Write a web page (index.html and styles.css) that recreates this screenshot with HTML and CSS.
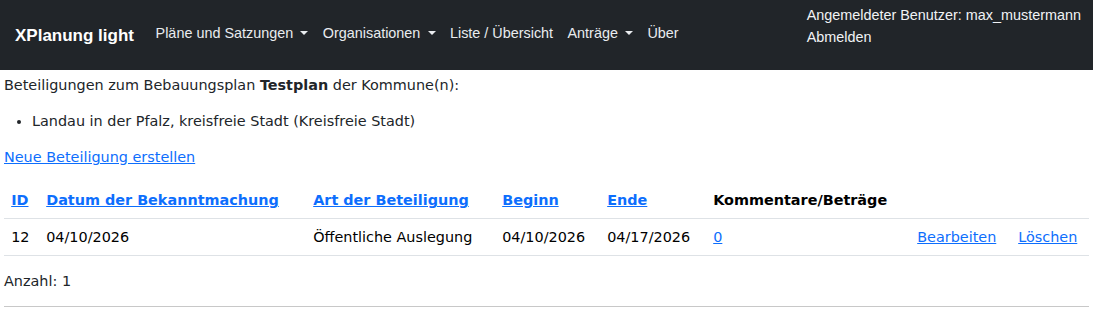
FILE: index.html
```html
<!DOCTYPE html>
<html lang="de">
<head>
  <meta charset="UTF-8">
  <meta name="viewport" content="width=device-width, initial-scale=1.0">
  <title>XPlanung light - Beteiligungen</title>
  <link rel="stylesheet" href="styles.css">
</head>
<body>
  <nav class="navbar">
    <a href="#" class="brand">XPlanung light</a>
    <ul class="nav">
      <li><a href="#" class="nav-link dropdown">Pläne und Satzungen</a></li>
      <li><a href="#" class="nav-link dropdown">Organisationen</a></li>
      <li><a href="#" class="nav-link">Liste / Übersicht</a></li>
      <li><a href="#" class="nav-link dropdown">Anträge</a></li>
      <li><a href="#" class="nav-link">Über</a></li>
    </ul>
    <div class="user">
      <div>Angemeldeter Benutzer: max_mustermann</div>
      <a href="#" class="logout">Abmelden</a>
    </div>
  </nav>

  <main class="content">
    <p>Beteiligungen zum Bebauungsplan <strong>Testplan</strong> der Kommune(n):</p>
    <ul class="kommunen">
      <li>Landau in der Pfalz, kreisfreie Stadt (Kreisfreie Stadt)</li>
    </ul>
    <p><a href="#">Neue Beteiligung erstellen</a></p>

    <table class="table">
      <thead>
        <tr>
          <th class="col-id"><a href="#">ID</a></th>
          <th class="col-datum"><a href="#">Datum der Bekanntmachung</a></th>
          <th class="col-art"><a href="#">Art der Beteiligung</a></th>
          <th class="col-beginn"><a href="#">Beginn</a></th>
          <th class="col-ende"><a href="#">Ende</a></th>
          <th class="col-komm">Kommentare/Beträge</th>
          <th class="col-edit"></th>
          <th class="col-del"></th>
        </tr>
      </thead>
      <tbody>
        <tr>
          <td>12</td>
          <td>04/10/2026</td>
          <td>Öffentliche Auslegung</td>
          <td>04/10/2026</td>
          <td>04/17/2026</td>
          <td><a href="#">0</a></td>
          <td><a href="#">Bearbeiten</a></td>
          <td><a href="#">Löschen</a></td>
        </tr>
      </tbody>
    </table>

    <p>Anzahl: 1</p>
    <hr>
  </main>
</body>
</html>
```

FILE: styles.css
```css
:root {
  --dark-bg: #212529;
  --link-blue: #0d6efd;
  --text: #212529;
  --border: #dee2e6;
}

* {
  box-sizing: border-box;
}

html {
  font-size: 90%;
}

body {
  margin: 0;
  font-family: "DejaVu Sans", sans-serif;
  font-size: 1rem;
  line-height: 1.5;
  color: var(--text);
  background: #fff;
}

a {
  color: var(--link-blue);
}

/* Navbar */
.navbar {
  display: flex;
  align-items: center;
  height: 70px;
  padding: 0 12px 0 15px;
  background-color: var(--dark-bg);
  font-family: "Liberation Sans", Arial, sans-serif;
}

.brand {
  color: #fff;
  font-weight: bold;
  font-size: 17px;
  text-decoration: none;
  margin-right: 1rem;
  margin-top: 2px;
}

.nav {
  display: flex;
  list-style: none;
  margin: 0 0 2px;
  padding: 0;
  flex: 1;
}

.nav-link {
  display: block;
  padding: 0.5rem;
  color: #e9ecef;
  text-decoration: none;
}

.dropdown:after {
  content: "";
  display: inline-block;
  margin-left: 0.5em;
  vertical-align: 0.2em;
  border-top: 0.32em solid;
  border-right: 0.32em solid transparent;
  border-left: 0.32em solid transparent;
}

.user {
  align-self: flex-start;
  padding-top: 4px;
  color: #f1f3f5;
  line-height: 22px;
}

.logout {
  color: #f1f3f5;
  text-decoration: none;
}

/* Content */
.content {
  padding: 4px 4px 0 4px;
}

/* text sits a pixel low in its line box */
p,
.kommunen {
  padding-top: 1px;
  margin: 0 0 calc(1rem - 1px);
}

.kommunen {
  padding-left: 28px;
}

.table {
  width: 100%;
  border-collapse: collapse;
  margin-bottom: 1rem;
  color: #000;
}

.table th,
.table td {
  padding: calc(0.5rem + 1px) 0.5rem calc(0.5rem - 1px);
  text-align: left;
  border-bottom: 1px solid var(--border);
  white-space: nowrap;
}

.table th {
  font-weight: bold;
}

.col-id { width: 35px; }
.col-datum { width: 267px; }
.col-art { width: 189px; }
.col-beginn { width: 105px; }
.col-ende { width: 106px; }
.col-komm { width: 204px; }
.col-edit { width: 101px; }

hr {
  margin: 0;
  border: 0;
  border-top: 1px solid #c8c8c8;
}
```
